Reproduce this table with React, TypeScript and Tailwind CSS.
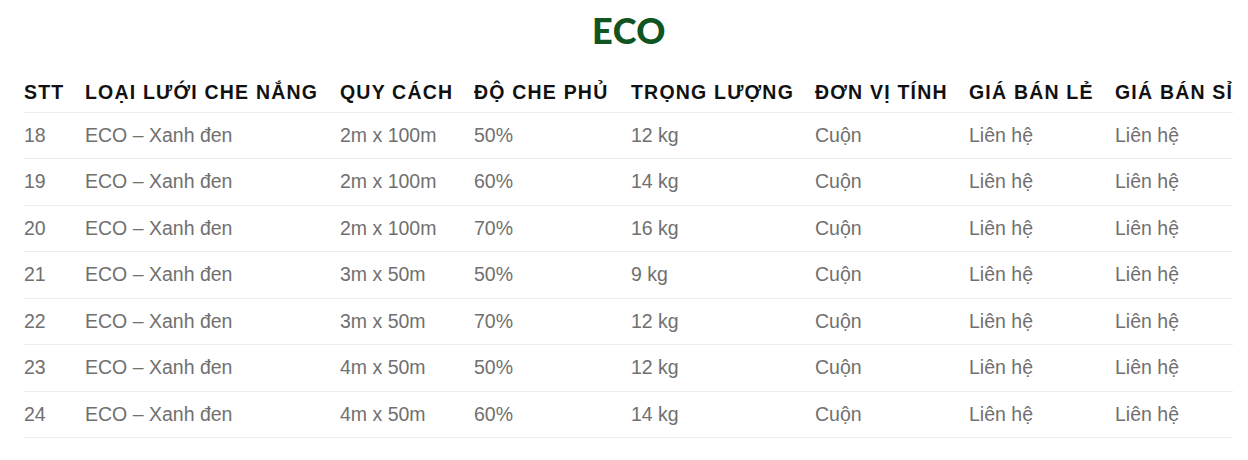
import React from "react";

const rows = [
  ["18", "ECO – Xanh đen", "2m x 100m", "50%", "12 kg"],
  ["19", "ECO – Xanh đen", "2m x 100m", "60%", "14 kg"],
  ["20", "ECO – Xanh đen", "2m x 100m", "70%", "16 kg"],
  ["21", "ECO – Xanh đen", "3m x 50m", "50%", "9 kg"],
  ["22", "ECO – Xanh đen", "3m x 50m", "70%", "12 kg"],
  ["23", "ECO – Xanh đen", "4m x 50m", "50%", "12 kg"],
  ["24", "ECO – Xanh đen", "4m x 50m", "60%", "14 kg"],
];

const headers = [
  "STT",
  "LOẠI LƯỚI CHE NẮNG",
  "QUY CÁCH",
  "ĐỘ CHE PHỦ",
  "TRỌNG LƯỢNG",
  "ĐƠN VỊ TÍNH",
  "GIÁ BÁN LẺ",
  "GIÁ BÁN SỈ",
];

const widths = [61, 255, 134, 157, 184, 154, 146, 118];

export default function App() {
  return (
    <div className="bg-white w-[1248px] h-[460px] px-[24px] pt-[8px]" style={{ fontFamily: '"Liberation Sans", Arial, sans-serif' }}>
      <h2 className="text-center text-[36px] leading-[44px] font-black text-[#0f5421] tracking-[0.5px] ml-[10px]" style={{ fontFamily: 'Lato, sans-serif' }}>
        ECO
      </h2>
      <table className="table-fixed border-collapse w-[1209px] mt-[18px]">
        <colgroup>
          {widths.map((w, i) => (
            <col key={i} style={{ width: w }} />
          ))}
        </colgroup>
        <thead>
          <tr className="border-b border-[#ececec]">
            {headers.map((h) => (
              <th key={h} className="text-left p-0 h-[42px] pt-[3px] text-[19.5px] font-bold text-[#111] tracking-[1.2px] whitespace-nowrap">
                {h}
              </th>
            ))}
          </tr>
        </thead>
        <tbody>
          {rows.map((r) => (
            <tr key={r[0]} className="border-b border-[#ececec]">
              {[...r, "Cuộn", "Liên hệ", "Liên hệ"].map((c, i) => (
                <td key={i} className="p-0 h-[46.5px] text-[19.5px] text-[#707070] whitespace-nowrap">
                  {c}
                </td>
              ))}
            </tr>
          ))}
        </tbody>
      </table>
    </div>
  );
}
